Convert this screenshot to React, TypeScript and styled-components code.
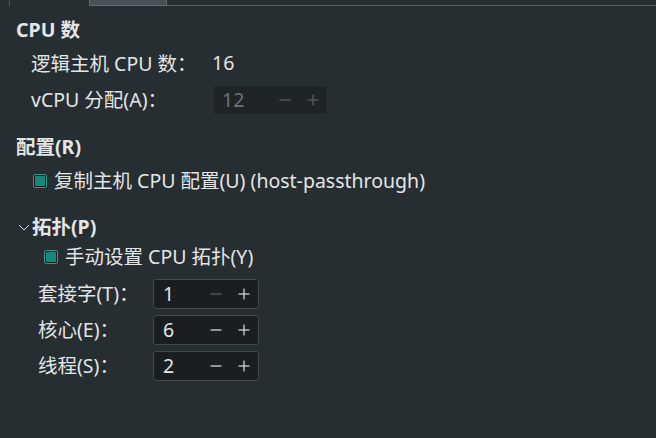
import React from "react";
import styled, { createGlobalStyle } from "styled-components";

const GlobalStyle = createGlobalStyle`
  body {
    margin: 0;
    background: #272e31;
    color: #e3e5e6;
    font-family: "Noto Sans", "Noto Sans CJK SC", sans-serif;
    font-size: 19.5px;
  }
`;

const Page = styled.div`
  width: 656px;
  height: 438px;
  overflow: hidden;
  background: #272e31;
`;

const TabStrip = styled.div`
  display: flex;
  height: 6px;
`;

const TabGap = styled.div`
  width: 89px;
  box-sizing: border-box;
  padding-left: 9px;
  display: flex;
`;

const TabEdge = styled.div`
  width: 1px;
  height: 6px;
  background: #4a5155;
`;

const Tab = styled.div`
  width: 78px;
  box-sizing: border-box;
  background: #4a5156;
  border: 1px solid #626a6f;
  border-top: none;
`;

const TabRest = styled.div`
  flex: 1;
  border-bottom: 1px solid #596064;
`;

const Content = styled.div`
  padding: 12px 0 0 16px;
  display: flex;
  flex-direction: column;
`;

const Heading = styled.div<{ $gap: number }>`
  display: flex;
  align-items: center;
  box-sizing: border-box;
  height: 24px;
  padding-bottom: 3px;
  margin-top: ${(p) => p.$gap}px;
  font-weight: 700;
`;

const Chevron = styled.svg`
  width: 14px;
  height: 10px;
  margin: 3px 1px 0 1px;
`;

const Form = styled.div<{ $gap: number; $indent: number; $label: number }>`
  display: grid;
  grid-template-columns: ${(p) => p.$label}px auto;
  grid-auto-rows: 30px;
  row-gap: 6px;
  align-items: center;
  justify-items: start;
  margin-top: ${(p) => p.$gap}px;
  padding-left: ${(p) => p.$indent}px;
`;

const Label = styled.div`
  white-space: nowrap;
  padding-bottom: 3px;
`;

const Value = styled.div`
  padding-bottom: 3px;
`;

const Spin = styled.div<{ $width: number; $disabled?: boolean }>`
  display: flex;
  align-items: center;
  box-sizing: border-box;
  width: ${(p) => p.$width}px;
  height: 30px;
  border-radius: 3px;
  background: ${(p) => (p.$disabled ? "#1f2427" : "#1b1e20")};
  border: 1px solid ${(p) => (p.$disabled ? "#2b3033" : "#42484c")};
  color: ${(p) => (p.$disabled ? "#6d7376" : "#e3e5e6")};
`;

const SpinValue = styled.span`
  flex: 1;
  padding-left: 9px;
  padding-bottom: 1px;
`;

const SpinButton = styled.svg`
  width: 28px;
  height: 28px;
  flex: none;
`;

const CheckRow = styled.div<{ $gap: number; $indent: number }>`
  display: flex;
  align-items: center;
  height: 24px;
  margin-top: ${(p) => p.$gap}px;
  padding-left: ${(p) => p.$indent}px;
  white-space: nowrap;
`;

const CheckText = styled.span`
  padding-bottom: 3px;
`;

const Box = styled.span`
  width: 14px;
  height: 14px;
  box-sizing: border-box;
  border: 1px solid #2d9a86;
  border-radius: 2px;
  padding: 1px;
  margin-right: 7px;
  background: #1c2022;
  display: flex;

  &::after {
    content: "";
    flex: 1;
    background: #19887a;
    border-radius: 1px;
  }
`;

const Sign = ({ plus, dim }: { plus?: boolean; dim?: boolean }) => (
  <SpinButton viewBox="0 0 28 28">
    <g stroke={dim ? "#5b6164" : "#dfe1e2"} strokeWidth={1.2}>
      <line x1={8.5} y1={14} x2={19.5} y2={14} />
      {plus && <line x1={14} y1={8.5} x2={14} y2={19.5} />}
    </g>
  </SpinButton>
);

const SpinBox = ({
  value,
  width,
  disabled,
  atMin,
}: {
  value: number;
  width: number;
  disabled?: boolean;
  atMin?: boolean;
}) => (
  <Spin $width={width} $disabled={disabled}>
    <SpinValue>{value}</SpinValue>
    <Sign dim={disabled || atMin} />
    <Sign plus dim={disabled} />
  </Spin>
);

export default function App() {
  return (
    <Page>
      <GlobalStyle />
      <TabStrip>
        <TabGap>
          <TabEdge />
        </TabGap>
        <Tab />
        <TabRest />
      </TabStrip>
      <Content>
        <Heading $gap={0}>CPU 数</Heading>
        <Form $gap={7} $indent={15} $label={181}>
          <Label>逻辑主机 CPU 数：</Label>
          <Value>16</Value>
          <Label>vCPU 分配(A)：</Label>
          <SpinBox value={12} width={116} disabled />
        </Form>

        <Heading $gap={20}>配置(R)</Heading>
        <CheckRow $gap={10} $indent={17}>
          <Box />
          <CheckText>复制主机 CPU 配置(U) (host-passthrough)</CheckText>
        </CheckRow>

        <Heading $gap={22}>
          <Chevron viewBox="0 0 14 10">
            <polyline points="2,3 7,8 12,3" fill="none" stroke="#d6d8d9" strokeWidth={1} />
          </Chevron>
          拓扑(P)
        </Heading>
        <CheckRow $gap={6} $indent={28}>
          <Box />
          <CheckText>手动设置 CPU 拓扑(Y)</CheckText>
        </CheckRow>
        <Form $gap={10} $indent={22} $label={115}>
          <Label>套接字(T)：</Label>
          <SpinBox value={1} width={106} atMin />
          <Label>核心(E)：</Label>
          <SpinBox value={6} width={106} />
          <Label>线程(S)：</Label>
          <SpinBox value={2} width={106} />
        </Form>
      </Content>
    </Page>
  );
}
